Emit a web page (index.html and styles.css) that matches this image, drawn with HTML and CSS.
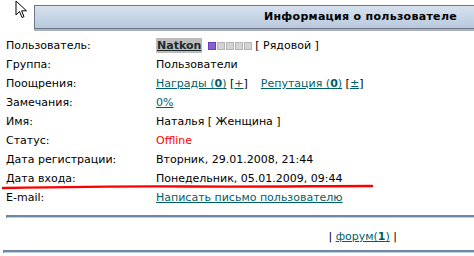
FILE: index.html
```html
<!DOCTYPE html>
<html lang="ru">
<head>
    <meta charset="UTF-8">
    <title>Информация о пользователе</title>
    <link rel="stylesheet" href="styles.css">
</head>
<body>
    <div class="page">
        <div class="title-bar">Информация о пользователе</div>
        <div class="profile">
            <div class="label">Пользователь:</div>
            <div class="value">
                <a class="nick" href="#">Natkon</a>
                <span class="rank">
                    <span class="pip on"></span><span class="pip"></span><span class="pip"></span><span class="pip"></span><span class="pip"></span>
                </span>
                [ Рядовой ]
            </div>
            <div class="label">Группа:</div>
            <div class="value">Пользователи</div>
            <div class="label">Поощрения:</div>
            <div class="value">
                <a href="#">Награды (<b>0</b>)</a> [<a href="#">+</a>]
                <span class="spacer"></span>
                <a href="#">Репутация (<b>0</b>)</a> [<a href="#">±</a>]
            </div>
            <div class="label">Замечания:</div>
            <div class="value"><a href="#">0%</a></div>
            <div class="label">Имя:</div>
            <div class="value">Наталья [ Женщина ]</div>
            <div class="label">Статус:</div>
            <div class="value offline">Offline</div>
            <div class="label">Дата регистрации:</div>
            <div class="value">Вторник, 29.01.2008, 21:44</div>
            <div class="label">Дата входа:</div>
            <div class="value">Понедельник, 05.01.2009, 09:44</div>
            <div class="label">E-mail:</div>
            <div class="value"><a href="#">Написать письмо пользователю</a></div>
        </div>
        <div class="rule rule-top"></div>
        <div class="links">| <a href="#">форум(<b>1</b>)</a> |</div>
        <div class="rule rule-bottom"></div>

        <!-- red marker stroke under the login date -->
        <svg class="marker" width="380" height="8" viewBox="0 0 380 8">
            <path d="M3 5 C 60 4, 120 3, 190 3.5 S 320 3, 372 3" stroke="#ff0000" stroke-width="2.4" fill="none" stroke-linecap="round"/>
        </svg>

        <svg class="cursor" width="14" height="20" viewBox="0 0 14 20">
            <path d="M1 1 L1 15 L4.5 11.5 L7 17.5 L9 16.6 L6.6 10.8 L11.5 10.8 Z" fill="#fff" stroke="#000" stroke-width="1"/>
        </svg>
    </div>
</body>
</html>
```

FILE: styles.css
```css
body {
    margin: 0;
    background: #fff;
    font-family: "DejaVu Sans", Verdana, sans-serif;
    font-size: 11px;
    color: #000;
}
.page {
    position: relative;
    width: 474px;
    height: 256px;
    overflow: hidden;
}
.title-bar {
    margin: 5px 0 0 34px;
    height: 22px;
    line-height: 22px;
    border: 1px solid #6e7788;
    border-right: none;
    background: linear-gradient(#d6e1ee, #b9c9dd);
    box-shadow: 0 2px 0 #a9b1bd;
    text-align: right;
    padding-right: 17px;
    font-weight: bold;
    font-size: 11px;
    letter-spacing: 0.3px;
}
.profile {
    display: grid;
    grid-template-columns: 150px 1fr;
    grid-template-rows: repeat(9, 19px);
    align-items: center;
    margin: 7px 0 0 6px;
}
.label,
.value {
    line-height: 19px;
    white-space: nowrap;
}
.value a {
    color: #005f66;
}
.nick {
    font-weight: bold;
    background: #bcbcbc;
    color: #1c2a2c !important;
    padding: 1px 1px;
}
.rank {
    display: inline-flex;
    gap: 1px;
    vertical-align: -1px;
    margin-left: 2px;
}
.pip {
    width: 8px;
    height: 8px;
    background: #d4d4d4;
    border: 1px solid #b4b4b4;
    box-sizing: border-box;
}
.pip.on {
    background: #8a5fd6;
    border-color: #6a3fb8;
}
.spacer {
    display: inline-block;
    width: 6px;
}
.offline {
    color: #ff0000;
}
.rule {
    height: 3px;
    border-left: 1px solid #6f87a6;
    background: linear-gradient(#6f87a6 0, #6f87a6 2px, #c3cfdf 2px, #c3cfdf 3px);
}
.rule-top {
    margin: 8px 0 0 6px;
}
.links {
    text-align: right;
    padding-right: 77px;
    margin-top: 10px;
    height: 18px;
    line-height: 18px;
}
.links a {
    color: #005f66;
}
.rule-bottom {
    margin: 4px 0 0 3px;
}
.marker {
    position: absolute;
    left: 0;
    top: 183px;
}
.cursor {
    position: absolute;
    left: 15px;
    top: 0;
}
```
